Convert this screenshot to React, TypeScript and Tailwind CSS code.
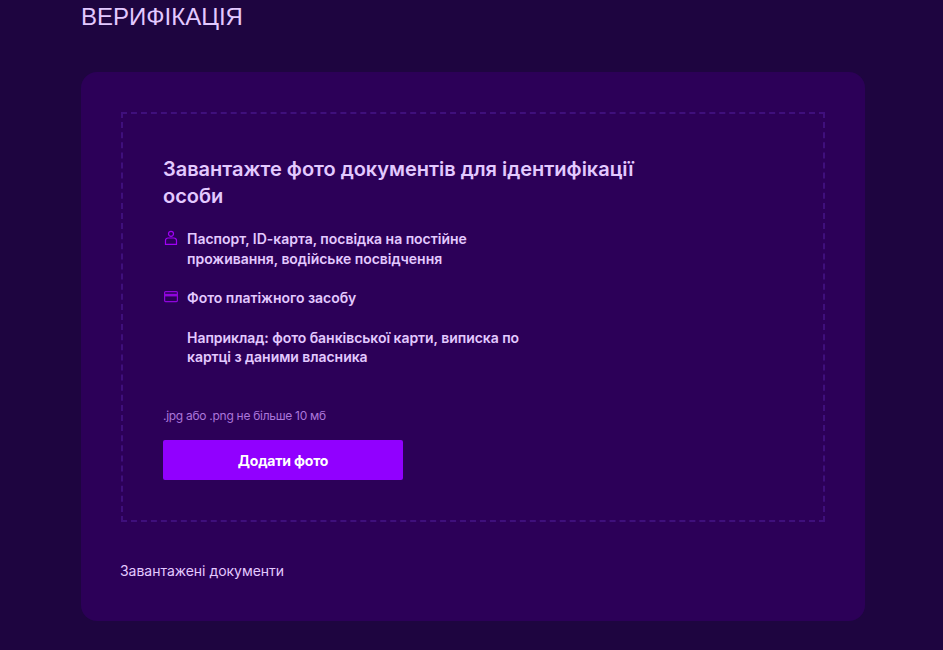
import React from "react";

const App: React.FC = () => {
  return (
    <div className="min-h-[650px] bg-[#1e0540] px-[81px] pr-[78px] font-['Inter',sans-serif] text-[#e3c9ff]">
      <h1 className="h-[72px] pt-[1px] font-['Liberation_Sans',sans-serif] text-[24px] leading-[32px] font-normal">ВЕРИФІКАЦІЯ</h1>

      <div className="h-[549px] rounded-[16px] bg-[#2c0058] px-[40px] pt-[40px]">
        {/* Upload area */}
        <div className="h-[410px] border-2 border-dashed border-[#3f0f7c] px-[40px] pt-[42px]">
          <h2 className="w-[500px] text-[20px] leading-[27px] font-semibold tracking-[-0.03px]">
            Завантажте фото документів для ідентифікації особи
          </h2>

          <div className="mt-[19px] flex w-[360px] gap-[8px]">
            <svg className="mt-[1px] h-[16px] w-[16px] shrink-0 text-[#a000f5]" viewBox="0 0 16 16" fill="none" stroke="currentColor" strokeWidth="1.2">
              <circle cx="8" cy="3.8" r="2.5" />
              <path d="M2.5 14.4h11v-3.8a2.6 2.6 0 0 0-2.6-2.6H5.1a2.6 2.6 0 0 0-2.6 2.6z" />
            </svg>
            <p className="text-[14px] leading-[20px] font-semibold tracking-[-0.03px]">
              Паспорт, ID-карта, посвідка на постійне проживання, водійське посвідчення
            </p>
          </div>

          <div className="mt-[19px] flex gap-[8px]">
            <svg className="mt-[1px] h-[16px] w-[16px] shrink-0 text-[#8f05dc]" viewBox="0 0 16 16" fill="none">
              <rect x="1.6" y="2.6" width="12.8" height="10" rx="1" stroke="currentColor" strokeWidth="1.2" />
              <rect x="2" y="4.8" width="12" height="2.6" fill="currentColor" />
            </svg>
            <p className="text-[14px] leading-[20px] font-semibold tracking-[-0.03px]">Фото платіжного засобу</p>
          </div>

          <p className="mt-[20px] ml-[24px] w-[345px] text-[14px] leading-[19px] font-semibold tracking-[-0.05px]">
            Наприклад: фото банківської карти, виписка по картці з даними власника
          </p>

          <p className="mt-[41px] text-[12px] leading-[18px] tracking-[-0.28px] text-[#ab76db]">.jpg або .png не більше 10 мб</p>

          <button className="mt-[15px] h-[40px] w-[240px] rounded-[2px] bg-[#9100ff] text-[14px] font-bold tracking-[-0.2px] text-white">
            Додати фото
          </button>
        </div>

        <p className="-ml-[1px] mt-[39px] text-[14px] leading-[20px] tracking-[-0.03px]">Завантажені документи</p>
      </div>
    </div>
  );
};

export default App;
